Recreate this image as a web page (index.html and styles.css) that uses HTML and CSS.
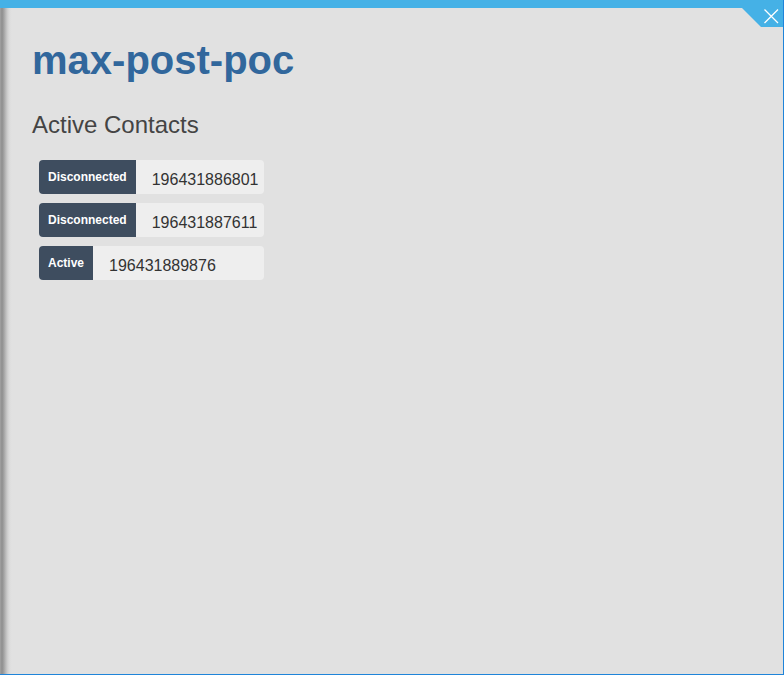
FILE: index.html
```html
<!DOCTYPE html>
<html lang="en">
<head>
<meta charset="utf-8">
<title>max-post-poc</title>
<link rel="stylesheet" href="styles.css">
</head>
<body>
<div class="window">
  <div class="titlebar"></div>
  <svg class="close" width="41" height="20" viewBox="0 0 41 20" aria-label="Close">
    <polygon points="0,0 41,0 41,19 19,19" fill="#45b1e6"/>
    <path d="M22.5 1.5 L36 15 M36 1.5 L22.5 15" stroke="#ffffff" stroke-width="1.3" fill="none"/>
  </svg>
  <div class="content">
    <h1 class="title">max-post-poc</h1>
    <h2 class="subtitle">Active Contacts</h2>
    <ul class="contacts">
      <li class="contact"><span class="status">Disconnected</span><span class="number">196431886801</span></li>
      <li class="contact"><span class="status">Disconnected</span><span class="number">196431887611</span></li>
      <li class="contact"><span class="status">Active</span><span class="number">196431889876</span></li>
    </ul>
  </div>
</div>
</body>
</html>
```
FILE: styles.css
```css
html, body {
  margin: 0;
  padding: 0;
}
body {
  font-family: "Liberation Sans", Arial, sans-serif;
  background: #e1e1e1;
}
.window {
  position: relative;
  box-sizing: border-box;
  width: 784px;
  height: 675px;
  border-right: 1px solid #1f84d9;
  border-bottom: 1px solid #1f84d9;
  background-color: #e1e1e1;
  background-image: linear-gradient(90deg, #a2a2a2 0px, #8e8e8e 2px, #a4a4a4 4px, #bebebe 6px, #d3d3d3 8px, #dedede 10px, #e1e1e1 12px);
}
.titlebar {
  height: 8px;
  background: #45b1e6;
}
.close {
  position: absolute;
  top: 8px;
  right: 0;
  display: block;
}
.content {
  padding: 0 32px;
}
.title {
  margin: 30px 0 0;
  font-size: 40px;
  line-height: 44px;
  font-weight: bold;
  color: #31679c;
}
.subtitle {
  margin: 30px 0 0;
  font-size: 24px;
  line-height: 26px;
  font-weight: normal;
  color: #444444;
}
.contacts {
  list-style: none;
  margin: 22px 0 0 7px;
  padding: 0;
  display: flex;
  flex-direction: column;
  gap: 9px;
}
.contact {
  display: flex;
  width: 225px;
  height: 34px;
  background: #eeeeee;
  border-radius: 4px;
}
.status {
  box-sizing: border-box;
  height: 34px;
  padding: 11px 9px 10px;
  font-size: 12px;
  line-height: 13px;
  font-weight: bold;
  color: #ffffff;
  background: #3e4d5f;
  border-radius: 4px 0 0 4px;
}
.number {
  padding: 11px 6px 5px 16px;
  font-size: 16px;
  line-height: 18px;
  color: #333333;
}
```
